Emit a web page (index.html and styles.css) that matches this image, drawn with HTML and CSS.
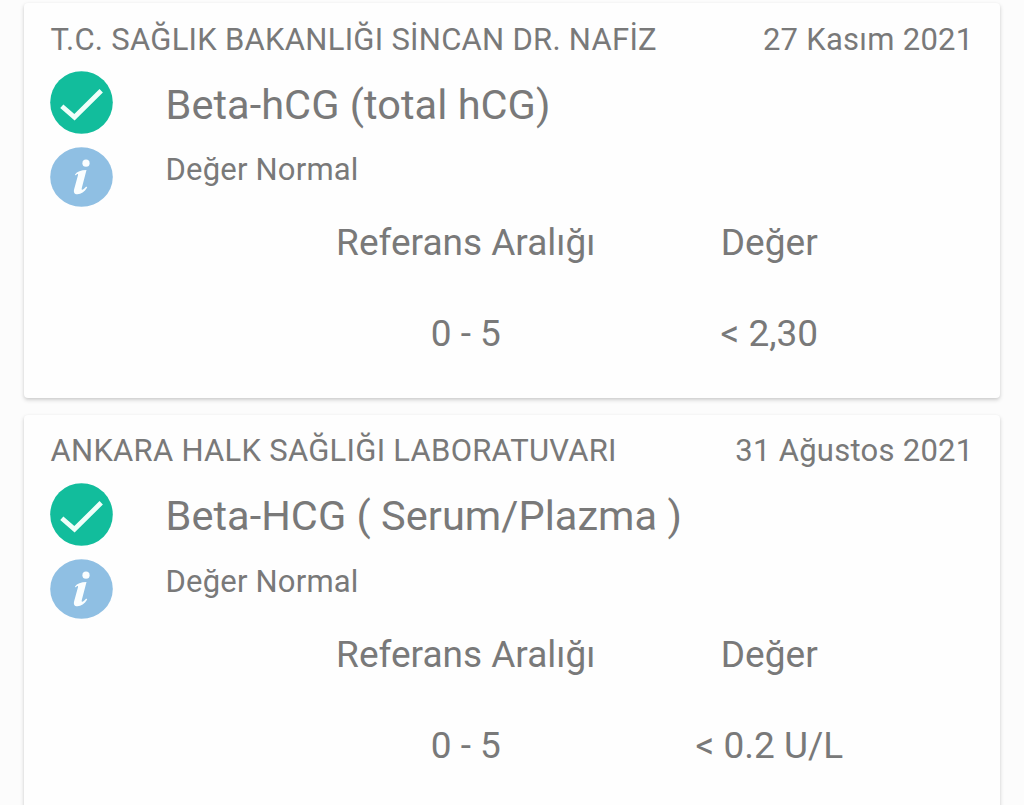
FILE: index.html
```
<!DOCTYPE html>
<html lang="tr">
<head>
  <meta charset="UTF-8">
  <meta name="viewport" content="width=device-width, initial-scale=1.0">
  <title>Tahlil Sonuçları</title>
  <link rel="stylesheet" href="styles.css">
</head>
<body>
  <div class="results">
    <!-- Kasım sonucu -->
    <div class="card">
      <div class="card-header">
        <span>T.C. SAĞLIK BAKANLIĞI SİNCAN DR. NAFİZ</span>
        <span>27 Kasım 2021</span>
      </div>
      <div class="card-body">
        <div class="icons">
          <svg class="icon-check" viewBox="0 0 63 63">
            <circle cx="31.5" cy="31.5" r="31.3" fill="#12bd9c"/>
            <path d="M11.8 35.2 L24.5 46.3 L51.2 19.8" fill="none" stroke="#effffa" stroke-width="4.8"/>
          </svg>
          <svg class="icon-info" viewBox="0 0 63 60">
            <ellipse cx="31.5" cy="30" rx="31.3" ry="29.8" fill="#8fbfe3"/>
            <circle cx="36" cy="16.2" r="3.6" fill="#fafeff"/>
            <path d="M25 27.5 C27 24.5 31 23 36.5 23 L31.8 41 C31.3 43.5 32.5 43.7 36.2 39.5 L37.2 40.5 C34.5 45 31 47.3 27.5 47.3 C24 47.3 23.4 45 24.2 42 L27.9 28.5 C28.4 26.5 27.5 26.5 25.5 28.5 Z" fill="#fafeff"/>
          </svg>
        </div>
        <div class="info">
          <h2 class="test-name">Beta-hCG (total hCG)</h2>
          <p class="status">Değer Normal</p>
        </div>
      </div>
      <div class="values">
        <span>Referans Aralığı</span>
        <span>Değer</span>
        <span>0 - 5</span>
        <span>&lt; 2,30</span>
      </div>
    </div>

    <!-- Ağustos sonucu -->
    <div class="card">
      <div class="card-header">
        <span>ANKARA HALK SAĞLIĞI LABORATUVARI</span>
        <span>31 Ağustos 2021</span>
      </div>
      <div class="card-body">
        <div class="icons">
          <svg class="icon-check" viewBox="0 0 63 63">
            <circle cx="31.5" cy="31.5" r="31.3" fill="#12bd9c"/>
            <path d="M11.8 35.2 L24.5 46.3 L51.2 19.8" fill="none" stroke="#effffa" stroke-width="4.8"/>
          </svg>
          <svg class="icon-info" viewBox="0 0 63 60">
            <ellipse cx="31.5" cy="30" rx="31.3" ry="29.8" fill="#8fbfe3"/>
            <circle cx="36" cy="16.2" r="3.6" fill="#fafeff"/>
            <path d="M25 27.5 C27 24.5 31 23 36.5 23 L31.8 41 C31.3 43.5 32.5 43.7 36.2 39.5 L37.2 40.5 C34.5 45 31 47.3 27.5 47.3 C24 47.3 23.4 45 24.2 42 L27.9 28.5 C28.4 26.5 27.5 26.5 25.5 28.5 Z" fill="#fafeff"/>
          </svg>
        </div>
        <div class="info">
          <h2 class="test-name">Beta-HCG ( Serum/Plazma )</h2>
          <p class="status">Değer Normal</p>
        </div>
      </div>
      <div class="values">
        <span>Referans Aralığı</span>
        <span>Değer</span>
        <span>0 - 5</span>
        <span>&lt; 0.2 U/L</span>
      </div>
    </div>
  </div>
</body>
</html>
```

FILE: styles.css
```
* {
  box-sizing: border-box;
}

body {
  margin: 0;
  height: 805px;
  overflow: hidden;
  background-color: #fcfcfc;
  color: #797979;
  font-family: Roboto, "Liberation Sans", sans-serif;
}

.results {
  display: flex;
  flex-direction: column;
  gap: 17px;
  padding: 3px 24px 0;
}

.card {
  flex: none;
  height: 394.5px;
  padding-top: 18.5px;
  background-color: #fefefe;
  border-radius: 4px;
  box-shadow: 0 2px 4px rgba(0, 0, 0, 0.17), 0 1px 3px rgba(0, 0, 0, 0.05);
}

.card-header {
  display: flex;
  justify-content: space-between;
  padding: 0 26.5px;
  font-size: 31px;
  line-height: 36px;
  letter-spacing: 0.27px;
  white-space: nowrap;
}

.card-body {
  display: flex;
  gap: 52.5px;
  height: 163.9px;
  padding: 13.9px 26px 0;
}

.icons {
  display: flex;
  flex-direction: column;
  gap: 13px;
}

.icon-check {
  width: 63px;
  height: 63px;
}

.icon-info {
  width: 63px;
  height: 60px;
}

.info {
  padding-top: 9.6px;
}

.test-name {
  margin: 0 0 23.5px;
  font-size: 41.5px;
  font-weight: 400;
  line-height: 48px;
  letter-spacing: 0.04px;
}

.status {
  margin: 0;
  font-size: 31px;
  line-height: 36px;
  letter-spacing: 0.2px;
}

.values {
  display: grid;
  grid-template-columns: 303.5px 303.5px;
  row-gap: 47px;
  margin-left: 290px;
  font-size: 37px;
  line-height: 44px;
  text-align: center;
}
```
